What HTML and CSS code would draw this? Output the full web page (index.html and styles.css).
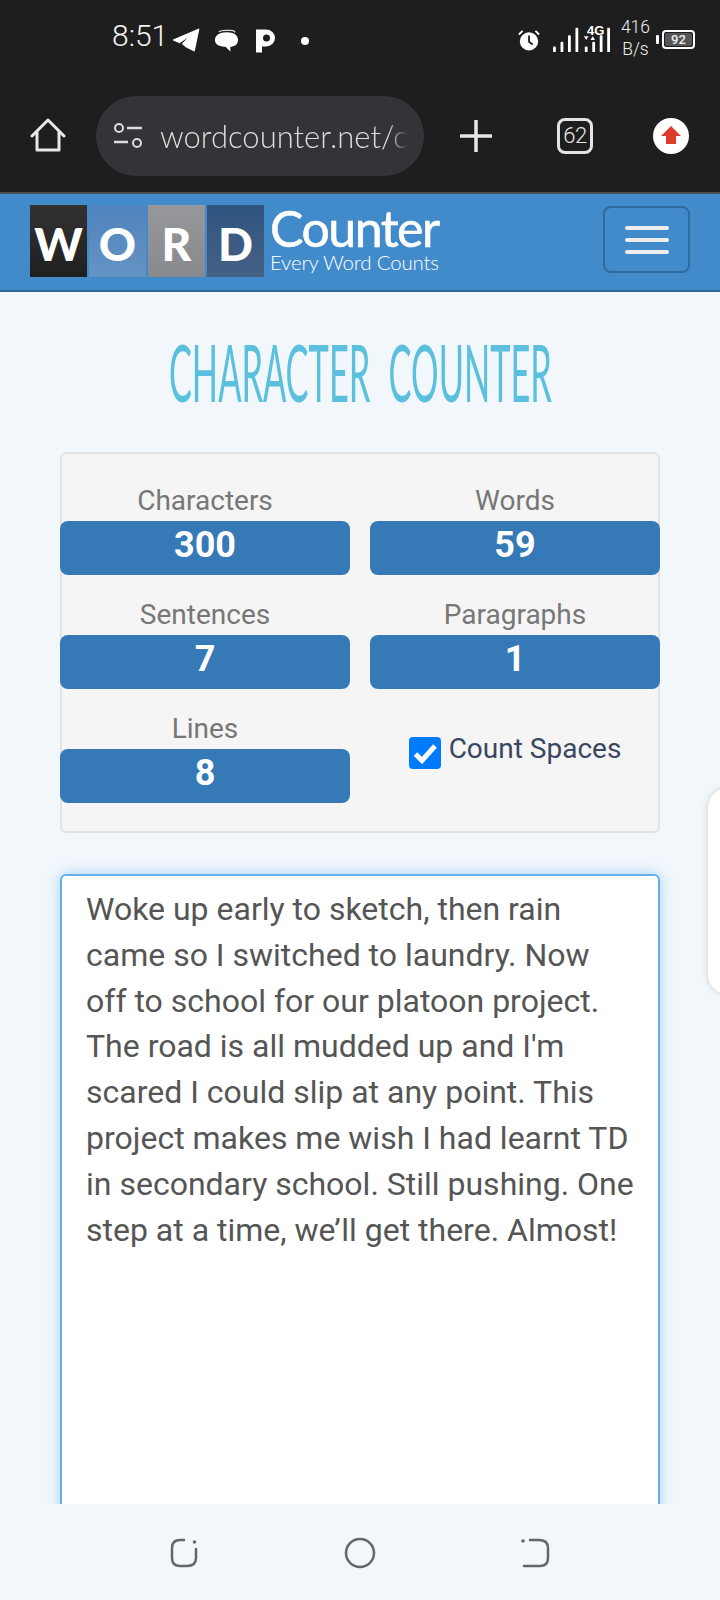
FILE: index.html
```html
<!DOCTYPE html>
<html lang="en">
<head>
<meta charset="utf-8">
<title>Character Counter</title>
<link rel="stylesheet" href="styles.css">
</head>
<body>
<div class="phone">
  <div class="chrome">
    <div class="status">
      <span class="time">8:51</span>
      <svg class="ic-tg" viewBox="0 0 30 26"><path d="M1 13 29 1 24 25 14 20 11 17 20 8 8 16Z" fill="#fff" stroke="#fff" stroke-width="1" stroke-linejoin="round"/></svg>
      <svg class="ic-chat" viewBox="0 0 26 24"><path d="M5 2.500Q7 1 12 1h6q3 0 4 2" stroke="#ddd" stroke-width="1.300" fill="none"/><path d="M13 3c8 0 12 3 12 8s-4 7-8 7v5l-5-5c-6 0-11-2-11-7s5-8 12-8Z" fill="#fff"/></svg>
      <svg class="ic-p" viewBox="0 0 20 24"><path fill-rule="evenodd" d="M0 1h10a9 8.500 0 0 1 0 17H6v6H0ZM10.500 6a3.500 3.500 0 1 0 0 7 3.500 3.500 0 0 0 0-7Z" fill="#fff"/></svg>
      <span class="dot"></span>
      <span class="grow"></span>
      <svg class="ic-alarm" viewBox="0 0 24 24"><circle cx="12" cy="13.500" r="10" fill="#fff"/><path d="M12 7v7l4 3" stroke="#1e1e1e" stroke-width="2" fill="none"/><path d="M1 6 5 2M23 6 19 2" stroke="#fff" stroke-width="2"/></svg>
      <svg class="ic-signal" viewBox="0 0 62 30"><g fill="#fff"><rect x="0" y="23" width="3" height="6" rx="1"/><rect x="8" y="18" width="3" height="11" rx="1"/><rect x="16" y="11" width="3" height="18" rx="1"/><rect x="24" y="3" width="3" height="26" rx="1"/><rect x="34" y="23" width="3" height="6" rx="1"/><rect x="42" y="18" width="3" height="11" rx="1"/><rect x="50" y="11" width="3" height="18" rx="1"/><rect x="58" y="3" width="3" height="26" rx="1"/><path d="M33 12h5l-2.500 4ZM40 16h5l-2.500-4Z"/></g></svg>
      <span class="fg">4G</span>
      <span class="speed"><span>416</span><span>B/s</span></span>
      <span class="batt-tip"></span>
      <span class="batt"><span class="batt-num">92</span></span>
    </div>
    <div class="toolbar">
      <svg class="ic-home" viewBox="0 0 36 36"><path d="M2 18 18 2l16 16M7 14v18h22V14" fill="none" stroke="#e8e8e8" stroke-width="3" stroke-linecap="round" stroke-linejoin="round"/></svg>
      <div class="omnibox">
        <svg class="ic-tune" viewBox="0 0 30 26"><circle cx="6" cy="5" r="4" fill="none" stroke="#ddd" stroke-width="2"/><path d="M14 5h15M1 19h14" stroke="#ddd" stroke-width="2.500"/><circle cx="24" cy="20" r="4" fill="none" stroke="#ddd" stroke-width="2"/></svg>
        <span class="url">wordcounter.net/c</span>
      </div>
      <svg class="ic-plus" viewBox="0 0 32 32"><path d="M16 1v30M1 16h30" stroke="#e8e8e8" stroke-width="3.500" stroke-linecap="round"/></svg>
      <span class="tabs">62</span>
      <svg class="ic-up" viewBox="0 0 36 36"><circle cx="18" cy="18" r="18" fill="#fff"/><path d="M18 8 28 18h-5v8H13v-8H8Z" fill="#dd3b2e"/></svg>
    </div>
  </div>
  <header class="site-head">
    <div class="logo">
      <span class="tile t-w">W</span>
      <span class="tile t-o">O</span>
      <span class="tile t-r">R</span>
      <span class="tile t-d">D</span>
      <div class="brand"><span class="brand-a">Counter</span><span class="brand-b">Every Word Counts</span></div>
    </div>
    <button class="burger"><span></span><span></span><span></span></button>
  </header>
  <main class="content">
    <h1 class="title"><span>CHARACTER COUNTER</span></h1>
    <section class="stats">
      <div class="stat"><div class="lbl">Characters</div><div class="val">300</div></div>
      <div class="stat"><div class="lbl">Words</div><div class="val">59</div></div>
      <div class="stat"><div class="lbl">Sentences</div><div class="val">7</div></div>
      <div class="stat"><div class="lbl">Paragraphs</div><div class="val">1</div></div>
      <div class="stat"><div class="lbl">Lines</div><div class="val">8</div></div>
      <label class="stat check">
        <svg class="box" viewBox="0 0 32 32"><rect width="32" height="32" rx="4" fill="#007bff"/><path d="M6.500 17 13 23.500 26 9" fill="none" stroke="#fff" stroke-width="5"/></svg>
        <span>Count Spaces</span>
      </label>
    </section>
    <div class="editor">Woke up early to sketch, then rain came so I switched to laundry. Now off to school for our platoon project. The road is all mudded up and I'm scared I could slip at any point. This project makes me wish I had learnt TD in secondary school. Still pushing. One step at a time, we’ll get there. Almost!</div>
    <div class="side-tab"></div>
  </main>
  <nav class="sysnav">
    <svg class="ic-nav" viewBox="0 0 32 32"><path d="M15 3h-4Q3 3 3 11v10q0 8 8 8h7q9 0 9-8V12" fill="none" stroke="#666" stroke-width="2.500" stroke-linecap="round"/><circle cx="25.500" cy="5" r="1.800" fill="#666"/></svg>
    <svg class="ic-nav" viewBox="0 0 32 32"><circle cx="16" cy="16" r="14" fill="none" stroke="#666" stroke-width="2.500"/></svg>
    <svg class="ic-nav" viewBox="0 0 32 32"><path d="M11 3h9q9 0 9 8v10q0 8-8 8H5" fill="none" stroke="#666" stroke-width="2.500" stroke-linecap="round"/><circle cx="4" cy="4" r="1.800" fill="#666"/></svg>
  </nav>
</div>
</body>
</html>
```
FILE: styles.css
```css
* { box-sizing: border-box; }
html, body { margin: 0; padding: 0; }
body { font-family: Roboto, "Liberation Sans", sans-serif; background: #f2f7fc; }
.phone { width: 720px; height: 1600px; display: flex; flex-direction: column; overflow: hidden; }

.chrome { height: 194px; background: #1e1e1e; border-bottom: 2px solid #4a4d52; flex: none; }
.status { height: 96px; display: flex; align-items: center; padding: 0 0 20px 112px; position: relative; color: #fff; }
.time { font: 300 30px Roboto, sans-serif; width: 60px; color: #f4f4f4; margin-top: -6px; }
.ic-tg { width: 28px; height: 24px; margin: 4px 0 0 0; }
.ic-chat { width: 25px; height: 24px; margin: 6px 0 0 14px; }
.ic-p { width: 20px; height: 25px; margin: 4px 0 0 17px; }
.dot { width: 8px; height: 8px; border-radius: 50%; background: #fff; margin: 6px 0 0 25px; }
.grow { flex: 1; }
.ic-alarm { width: 22px; height: 24px; margin-top: 4px; }
.ic-signal { width: 60px; height: 28px; margin: 2px 0 0 12px; }
.fg { position: absolute; left: 587px; top: 23px; font: 700 13px "Liberation Sans", sans-serif; color: #fff; }
.speed { display: flex; flex-direction: column; align-items: center; font: 300 17.500px/22px Roboto, sans-serif; margin: 0 0 0 9px; color: #eee; }
.batt-tip { width: 3px; height: 9px; background: #fff; margin: 3px 0 0 6px; border-radius: 1px; }
.batt { width: 33px; height: 19px; border: 2px solid #fff; border-radius: 4px; margin: 2px 25px 0 3px; padding: 1px; display: flex; }
.batt-num { flex: 1; background: #555; border-radius: 2px; font: 500 13px/13px Roboto, sans-serif; color: #eee; text-align: center; }

.toolbar { display: flex; align-items: center; height: 80px; padding: 0 24px 0 30px; }
.ic-home { width: 36px; height: 36px; flex: none; }
.omnibox { width: 328px; height: 80px; margin-left: 30px; background: #323438; border-radius: 40px; display: flex; align-items: center; padding-left: 17px; flex: none; }
.ic-tune { width: 30px; height: 26px; flex: none; }
.url { font: 300 31px Lato, sans-serif; color: #ddd; margin-left: 17px; width: 248px; overflow: hidden; white-space: nowrap; -webkit-mask-image: linear-gradient(90deg, #000 92%, transparent); mask-image: linear-gradient(90deg, #000 92%, transparent); }
.ic-plus { width: 32px; height: 32px; margin-left: 36px; flex: none; }
.tabs { width: 36px; height: 36px; margin-left: 65px; border: 3.500px solid #e4e4e4; border-radius: 8px; color: #e8e8e8; font: 300 22px/29px Roboto, sans-serif; text-align: center; flex: none; letter-spacing: -.5px; }
.ic-up { width: 36px; height: 36px; margin-left: 60px; flex: none; }

.site-head { height: 98px; background: #428bca; border-bottom: 2px solid #2f6a9f; display: flex; align-items: center; justify-content: space-between; padding: 0 30px 0 30px; flex: none; }
.logo { display: flex; align-items: stretch; height: 72px; gap: 2px; margin-top: -2px; }
.tile { width: 57px; display: flex; align-items: center; justify-content: center; padding-top: 6px; color: #fff; font: 900 46px/1 Lato, "Liberation Sans", sans-serif; }
.t-w { background: linear-gradient(#333231, #1f1f1f); }
.t-o { background: linear-gradient(#4f83bd, #6593c4); }
.t-r { background: linear-gradient(#97989c, #88898d); }
.t-d { background: linear-gradient(#2f5580, #466085); }
.brand { display: flex; flex-direction: column; margin-left: 4px; color: #fff; }
.brand-a { font: 400 50px/46px Lato, sans-serif; letter-spacing: -1.500px; -webkit-text-stroke: .6px #fff; }
.brand-b { font: 300 20.500px/22px Lato, sans-serif; letter-spacing: -.2px; }
.burger { width: 87px; height: 67px; background: transparent; border: 2px solid #2f6a9f; border-radius: 8px; display: flex; flex-direction: column; align-items: center; justify-content: center; gap: 8px; padding: 0; margin-top: -5px; }
.burger span { width: 44px; height: 4px; background: #eee; border-radius: 2px; }

.content { flex: 1; min-height: 0; position: relative; overflow: hidden; padding: 0 60px; }
.title { margin: 44px 0 0; height: 70px; display: flex; justify-content: center; font-weight: 400; }
.title span { font: 400 80px/70px Lato, sans-serif; color: #5bc0de; transform: scaleX(.43); word-spacing: 22px; white-space: nowrap; }
.stats { margin-top: 46px; height: 381px; background: #f5f5f5; border: 2px solid #e3e3e3; border-radius: 6px; display: grid; grid-template-columns: 290px 290px; column-gap: 20px; grid-auto-rows: 114px; padding: 28px 0 0; width: 600px; }
.stat { margin: 0 2px 0 -2px; display: flex; flex-direction: column; }
.lbl { height: 39px; font: 400 28px/37px Roboto, sans-serif; color: #777; text-align: center; }
.val { height: 54px; background: #3579b7; border-radius: 8px; color: #fff; font: 700 36px/48px Roboto, sans-serif; text-align: center; }
.check { flex-direction: row; align-items: flex-start; justify-content: center; padding-top: 23px; gap: 8px; font: 400 28px/32px Roboto, sans-serif; color: #3b4761; }
.box { width: 32px; height: 32px; margin-top: 4px; flex: none; }
.editor { margin-top: 41px; height: 760px; width: 600px; background: #fff; border: 2px solid #66afe9; border-radius: 6px; box-shadow: 0 0 14px rgba(102, 175, 233, .55); padding: 11px 22px 0 24px; font: 400 32px/45.800px Roboto, sans-serif; color: #555; }
.side-tab { position: absolute; right: -30px; top: 494px; width: 44px; height: 210px; background: #fff; border: 2px solid #e6e6e6; border-radius: 24px; box-shadow: 0 0 6px rgba(0,0,0,.08); }

.sysnav { height: 96px; flex: none; background: #f2f7fc; display: flex; justify-content: center; gap: 143px; padding-top: 33px; }
.ic-nav { width: 32px; height: 32px; }
```
